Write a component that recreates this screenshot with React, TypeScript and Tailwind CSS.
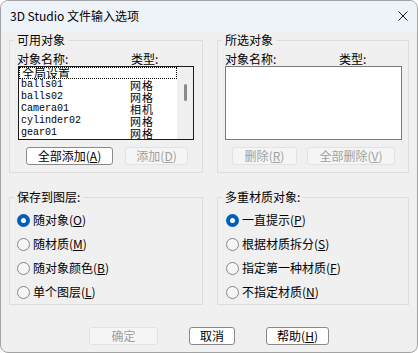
const font = "font-['Noto_Sans_CJK_SC','Noto_Sans',sans-serif]";
const mono = "font-['Liberation_Mono','Noto_Sans_CJK_SC',monospace]";

type Mn = { text: string; k?: string };

const Label = ({ text, k }: Mn) => (
  <span className="whitespace-nowrap">
    {text}
    {k && (
      <>
        (<u>{k}</u>)
      </>
    )}
  </span>
);

const Button = ({
  text,
  k,
  w,
  disabled,
}: Mn & { w: string; disabled?: boolean }) => (
  <div
    className={`${w} h-[18px] flex items-center justify-center rounded-[3px] border text-[12px] leading-[16px] ${
      disabled
        ? "bg-[#f5f5f5] border-[#e2e2e2] text-[#a0a0a0]"
        : "bg-white border-[#8a8a8a] text-black"
    }`}
  >
    <Label text={text} k={k} />
  </div>
);

const Radio = ({ text, k, checked }: Mn & { checked?: boolean }) => (
  <div className="h-[24px] flex items-center">
    {checked ? (
      <span className="w-[13px] h-[13px] rounded-full bg-[#005fb8] flex items-center justify-center">
        <span className="w-[5px] h-[5px] rounded-full bg-white" />
      </span>
    ) : (
      <span className="w-[13px] h-[13px] rounded-full border border-[#858585] bg-[#f6f6f6]" />
    )}
    <span className="ml-[3px] text-[12px] leading-[16px]">
      <Label text={text} k={k} />
    </span>
  </div>
);

const Group = ({
  title,
  w,
  children,
}: {
  title: string;
  w: string;
  children: React.ReactNode;
}) => (
  <fieldset className={`${w} border border-[#dcdcdc] p-0 m-0`}>
    <legend className="ml-[4px] px-[3px] text-[12px] leading-[16px]">{title}</legend>
    {children}
  </fieldset>
);

const rows = [
  { name: "全局设置", type: "", focus: true },
  { name: "balls01", type: "网格" },
  { name: "balls02", type: "网格" },
  { name: "Camera01", type: "相机" },
  { name: "cylinder02", type: "网格" },
  { name: "gear01", type: "网格" },
];

export default function App() {
  return (
    <div
      className={`${font} w-[418px] h-[353px] bg-[#f0f0f0] border border-[#a3a3a3] rounded-[8px] overflow-hidden flex flex-col text-black`}
    >
      <div className="h-[30px] shrink-0 bg-[#eef3f9] flex items-center pl-[9px] pr-[9px]">
        <span className="text-[12px] leading-[16px]">3D Studio 文件输入选项</span>
        <svg className="ml-auto" width="10" height="10" viewBox="0 0 10 10">
          <path d="M0.5 0.5 L9.5 9.5 M9.5 0.5 L0.5 9.5" stroke="#1a1a1a" strokeWidth="1" />
        </svg>
      </div>

      <div className="flex flex-col px-[8px] pt-[1px]">
        <div className="flex gap-[14px]">
          <Group title="可用对象" w="w-[195px]">
            <div className="mt-[4px] pl-[7px] h-[14px] flex text-[12px] leading-[14px]">
              <span className="w-[114px]">对象名称:</span>
              <span>类型:</span>
            </div>
            <div className="ml-[8px] w-[176px] h-[74px] border border-[#1a1a1a] bg-white flex overflow-hidden">
              <div className="w-[158px] flex flex-col">
                {rows.map((r) => (
                  <div
                    key={r.name}
                    className={`h-[12px] shrink-0 flex items-center pl-[2px] overflow-hidden ${
                      r.focus ? "border border-dotted border-black" : ""
                    }`}
                  >
                    <span
                      className={`w-[109px] ${r.focus ? "text-[12px]" : `${mono} text-[10px]`} leading-[12px]`}
                    >
                      {r.name}
                    </span>
                    <span className="text-[11px] leading-[12px] tracking-[1px]">{r.type}</span>
                  </div>
                ))}
              </div>
              <div className="w-[16px] bg-[#f0f0f0] flex flex-col items-center pt-[17px]">
                <span className="w-[3px] h-[17px] rounded-full bg-[#8a8a8a]" />
              </div>
            </div>
            <div className="mt-[7px] mb-[7px] ml-[16px] flex gap-[12px]">
              <Button text="全部添加" k="A" w="w-[87px]" />
              <Button text="添加" k="D" w="w-[63px]" disabled />
            </div>
          </Group>

          <Group title="所选对象" w="w-[193px]">
            <div className="mt-[4px] pl-[7px] h-[14px] flex text-[12px] leading-[14px]">
              <span className="w-[114px]">对象名称:</span>
              <span>类型:</span>
            </div>
            <div className="ml-[7px] w-[177px] h-[74px] border border-[#7a7a7a] bg-white" />
            <div className="mt-[7px] mb-[7px] ml-[14px] flex gap-[10px]">
              <Button text="删除" k="R" w="w-[65px]" disabled />
              <Button text="全部删除" k="V" w="w-[88px]" disabled />
            </div>
          </Group>
        </div>

        <div className="flex gap-[14px] mt-[16px]">
          <Group title="保存到图层:" w="w-[195px]">
            <div className="pt-[3px] pl-[7px] flex flex-col">
              <Radio text="随对象" k="O" checked />
              <Radio text="随材质" k="M" />
              <Radio text="随对象颜色" k="B" />
              <Radio text="单个图层" k="L" />
            </div>
          </Group>
          <Group title="多重材质对象:" w="w-[193px]">
            <div className="pt-[3px] pl-[8px] flex flex-col">
              <Radio text="一直提示" k="P" checked />
              <Radio text="根据材质拆分" k="S" />
              <Radio text="指定第一种材质" k="F" />
              <Radio text="不指定材质" k="N" />
            </div>
          </Group>
        </div>

        <div className="mt-[22px] flex justify-center gap-[31px]">
          <Button text="确定" w="w-[69px]" disabled />
          <Button text="取消" w="w-[46px]" />
          <Button text="帮助" k="H" w="w-[63px]" />
        </div>
      </div>
    </div>
  );
}
